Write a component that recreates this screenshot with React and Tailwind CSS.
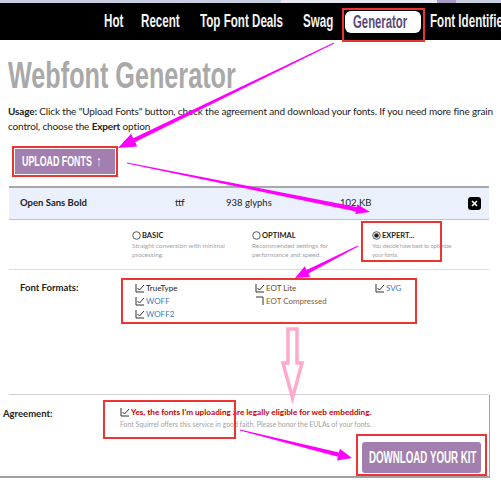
import React from "react";

function arrowPts(x1, y1, x2, y2, head, hw, w1, w2) {
  const dx = x2 - x1, dy = y2 - y1;
  const L = Math.hypot(dx, dy);
  const ux = dx / L, uy = dy / L, nx = -uy, ny = ux;
  const bx = x2 - ux * head, by = y2 - uy * head;
  const p = [
    [x1 + nx * w1, y1 + ny * w1],
    [bx + nx * w2, by + ny * w2],
    [bx + nx * hw, by + ny * hw],
    [x2, y2],
    [bx - nx * hw, by - ny * hw],
    [bx - nx * w2, by - ny * w2],
    [x1 - nx * w1, y1 - ny * w1],
  ];
  return p.map((q) => q[0].toFixed(1) + "," + q[1].toFixed(1)).join(" ");
}

const cond = { fontFamily: "'Liberation Sans',Arial,sans-serif" };
const body = { fontFamily: "Lato,'Liberation Sans',sans-serif" };

function Check({ checked = true }) {
  return (
    <svg width="10" height="10" viewBox="0 0 10 10" className="shrink-0">
      {checked ? (
        <>
          <path d="M1 1V9H9" fill="none" stroke="#333" strokeWidth="1" />
          <path d="M2.5 5L4.5 7L9 2" fill="none" stroke="#333" strokeWidth="1" />
        </>
      ) : (
        <path d="M1 1H8V9" fill="none" stroke="#333" strokeWidth="1" />
      )}
    </svg>
  );
}

function Radio({ on }) {
  return (
    <svg width="9" height="9" viewBox="0 0 9 9" className="shrink-0">
      <circle cx="4.5" cy="4.5" r="3.8" fill="none" stroke="#444" strokeWidth="0.9" />
      {on && <circle cx="4.5" cy="4.5" r="2.3" fill="#222" />}
    </svg>
  );
}

function NavItem({ w, children }) {
  return (
    <div className={"shrink-0 overflow-visible whitespace-nowrap " + w}>
      <span className="inline-block origin-left scale-x-[0.645] text-[18px] font-bold text-[#f4f4f4]">{children}</span>
    </div>
  );
}

export default function App() {
  return (
    <div className="relative w-[501px] h-[494px] overflow-hidden bg-white" style={body}>
      {/* top strip */}
      <div className="flex h-[3px]">
        <div className="w-[281px] bg-[#c9d0e2]" />
        <div className="w-[156px] bg-[#e6e9f2]" />
        <div className="w-[19px] bg-[#a99bc4]" />
        <div className="flex-1 bg-[#c9d0e2]" />
      </div>
      {/* nav */}
      <nav className="flex h-[37px] items-center bg-black pl-[104px]" style={cond}>
        <NavItem w="w-[37px]">Hot</NavItem>
        <NavItem w="w-[59px]">Recent</NavItem>
        <NavItem w="w-[103px]">Top Font Deals</NavItem>
        <NavItem w="w-[40px]">Swag</NavItem>
        <div className="relative shrink-0 ml-[2px] mr-[9px] w-[76px] h-[22px] mt-[1px] rounded-[6px] bg-white flex items-center pl-[8px]">
          <div className="absolute left-[-3px] top-[-3px] right-[-4px] bottom-[-9px] border-2 border-[#ee3333]" />
          <span className="inline-block origin-left scale-x-[0.63] text-[18px] font-bold text-[#5a4a78] whitespace-nowrap">Generator</span>
        </div>
        <NavItem w="w-[80px]">Font Identifier</NavItem>
      </nav>

      <div className="px-[8px]">
        <h1 className="mt-[16px] h-[40px] whitespace-nowrap text-[#a9a9a9]" style={cond}>
          <span className="inline-block origin-left scale-x-[0.7] text-[36px] font-bold leading-[40px]">Webfont Generator</span>
        </h1>
        <p className="mt-[8px] text-[10px] leading-[15px] tracking-[-0.15px] text-[#222]">
          <b>Usage:</b> Click the "Upload Fonts" button, check the agreement and download your fonts. If you need more fine grain control, choose the <b>Expert</b> option
        </p>
        <div className="mt-[12px] ml-[4px] w-[106px] border-2 border-[#ee3333] p-[1px]">
          <div className="h-[25px] bg-[#a27fae] flex items-center pl-[7px] text-white whitespace-nowrap overflow-hidden" style={cond}>
            <span className="inline-block origin-left scale-x-[0.59] text-[15px] font-bold">UPLOAD FONTS &nbsp;↑</span>
          </div>
        </div>
      </div>

      {/* font table */}
      <div className="ml-[9px] mt-[9px] w-[480px]">
        <div className="flex h-[34px] items-center border-t-2 border-b border-t-[#a8a8a8] border-b-[#c4c4c4] bg-[#eaf1fc] text-[9.5px] text-[#222]">
          <span className="w-[166px] pl-[11px] font-bold">Open Sans Bold</span>
          <span className="w-[51px]">ttf</span>
          <span className="w-[114px]">938 glyphs</span>
          <span className="w-[128px]">102 KB</span>
          <span className="flex h-[13px] w-[13px] items-center justify-center rounded-[3px] bg-black">
            <svg width="7" height="7" viewBox="0 0 7 7"><path d="M1 1L6 6M6 1L1 6" stroke="white" strokeWidth="1.6" /></svg>
          </span>
        </div>
        {/* options */}
        <div className="flex h-[50px] border-b border-[#dcdcdc] pl-[123px] pt-[10px]">
          <div className="w-[120px]">
            <div className="flex items-center gap-[1px] text-[7.5px] font-bold text-[#222]"><Radio />BASIC</div>
            <div className="mt-[1px] w-[100px] text-[6.5px] leading-[8.5px] text-[#a3a3a3]">Straight conversion with minimal processing.</div>
          </div>
          <div className="w-[120px]">
            <div className="flex items-center gap-[1px] text-[7.5px] font-bold text-[#222]"><Radio />OPTIMAL</div>
            <div className="mt-[1px] w-[100px] text-[6.5px] leading-[8.5px] text-[#a3a3a3]">Recommended settings for performance and speed.</div>
          </div>
          <div className="relative w-[100px]">
            <div className="absolute left-[-11px] top-[-9px] h-[41px] w-[81px] border-2 border-[#ee3333]" />
            <div className="flex items-center gap-[1px] text-[7.5px] font-bold text-[#222]"><Radio on />EXPERT...</div>
            <div className="mt-[1px] whitespace-nowrap text-[6px] leading-[8.5px] tracking-[-0.2px] text-[#a3a3a3]">You decide how best to optimize<br />your fonts.</div>
          </div>
        </div>
        {/* formats */}
        <div className="flex pt-[8px] h-[125px] border-b border-[#d0d0d0]">
          <div className="w-[112px] pl-[11px] pt-[3px] text-[9.5px] font-bold text-[#222]">Font Formats:</div>
          <div className="relative flex h-[46px] w-[296px] border-2 border-[#ee3333] pl-[12px] pt-[2px] text-[8px] leading-[12px]">
            <div className="flex w-[120px] flex-col gap-[1px]">
              <div className="flex items-center gap-[1px] text-[#222]"><Check />TrueType</div>
              <div className="flex items-center gap-[1px] text-[#3b78c8]"><Check />WOFF</div>
              <div className="flex items-center gap-[1px] text-[#3b78c8]"><Check />WOFF2</div>
            </div>
            <div className="flex w-[120px] flex-col gap-[1px]">
              <div className="flex items-center gap-[1px] text-[#6a4a2a]"><Check />EOT Lite</div>
              <div className="flex items-center gap-[1px] text-[#8a5a30]"><Check checked={false} />EOT Compressed</div>
            </div>
            <div className="flex flex-col">
              <div className="flex items-center gap-[1px] text-[#3b78c8]"><Check />SVG</div>
            </div>
          </div>
        </div>
      </div>

      {/* agreement */}
      <div className="flex h-[83px] w-[490px] border-b-2 border-r border-b-[#a0a0a0] border-r-[#a0a0a0]">
        <div className="w-[103px] pl-[3px] pt-[12px] text-[9.5px] font-bold text-[#222]">Agreement:</div>
        <div className="flex-1">
          <div className="relative mt-[5px] h-[39px]">
            <div className="absolute left-0 top-0 h-[39px] w-[133px] border-2 border-[#ee3333]" />
            <div className="flex items-center gap-[1px] pl-[17px] pt-[6px] text-[8.2px] font-bold text-[#cc0000] whitespace-nowrap">
              <Check />Yes, the fonts I'm uploading are legally eligible for web embedding.
            </div>
            <div className="pl-[17px] pt-[1px] text-[6.9px] text-[#a3a3a3] whitespace-nowrap">Font Squirrel offers this service in good faith. Please honor the EULAs of your fonts.</div>
          </div>
          <div className="mt-[-5px] ml-[253px] w-[131px] border-2 border-[#ee3333] pl-[4px] pt-[6px] pb-[1px]">
            <div className="flex h-[31px] w-[119px] items-center overflow-hidden rounded-[3px] bg-[#a27fae] pl-[7px] text-white whitespace-nowrap" style={cond}>
              <span className="inline-block origin-left scale-x-[0.59] text-[16.5px] font-bold">DOWNLOAD YOUR KIT</span>
            </div>
          </div>
        </div>
      </div>

      {/* overlay arrows */}
      <svg className="pointer-events-none absolute left-0 top-0" width="501" height="494" viewBox="0 0 501 494">
        <g fill="#ff00ff">
          <polygon points={arrowPts(334, 43, 118, 148, 18, 7, 0.4, 2.2)} />
          <polygon points={arrowPts(127, 163, 370, 212, 14, 5, 0.4, 2.2)} />
          <polygon points={arrowPts(358, 246, 295, 278, 14, 6, 0.4, 2)} />
          <polygon points={arrowPts(240, 430, 352, 458, 14, 6, 0.4, 2.2)} />
        </g>
        <path d="M288 329H297V363H302L292.5 398L283 363H288Z" fill="white" stroke="#ffaacc" strokeWidth="3.5" strokeLinejoin="miter" />
      </svg>
    </div>
  );
}
